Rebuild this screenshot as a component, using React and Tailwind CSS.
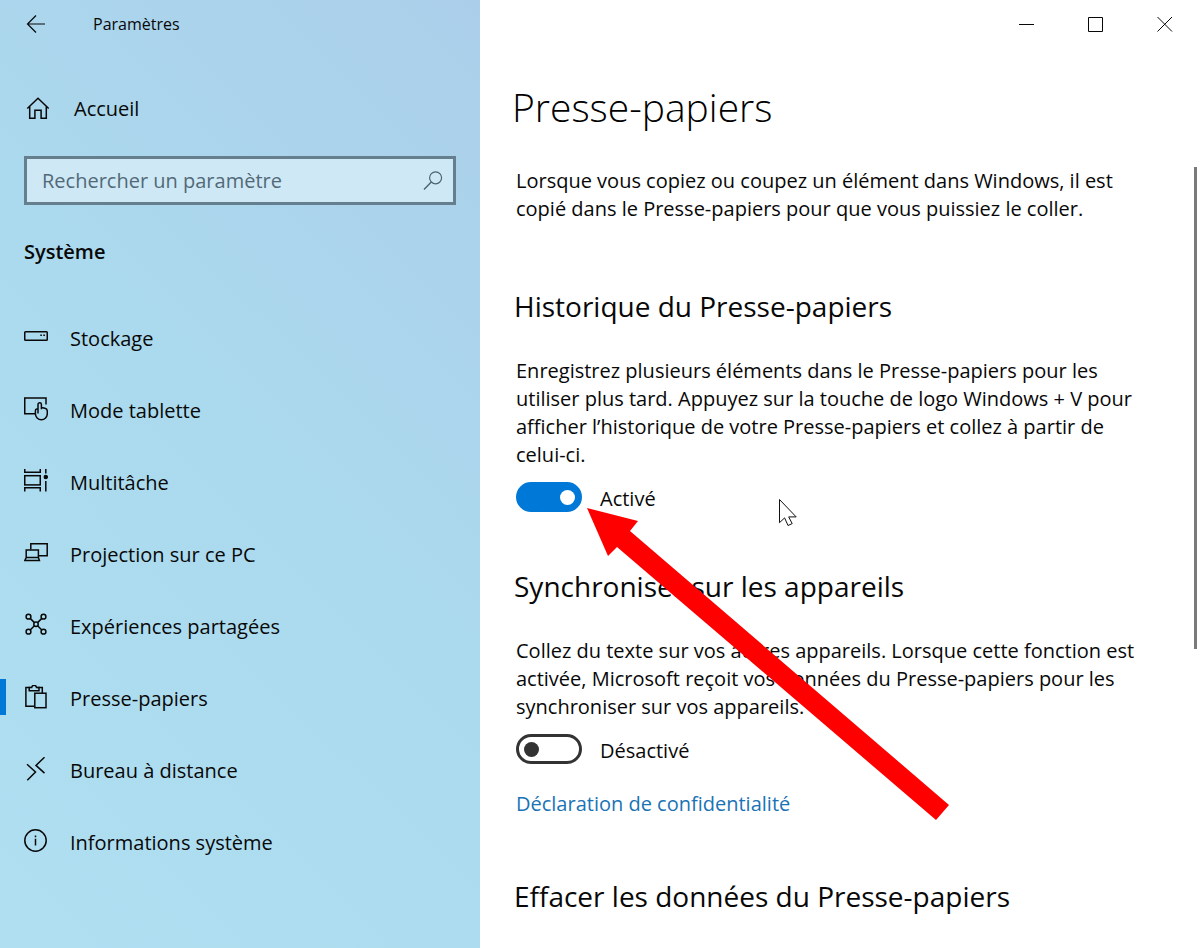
import React, { useState } from 'react';

const Icon = ({ children, className = 'w-6 h-6' }) => (
  <svg
    viewBox="0 0 24 24"
    fill="none"
    stroke="currentColor"
    strokeWidth="1.5"
    aria-hidden="true"
    className={`${className} shrink-0`}
  >
    {children}
  </svg>
);

const NAV_ITEMS = [
  {
    label: 'Stockage',
    icon: (
      <>
        <rect x="0.75" y="6.75" width="22.5" height="8.5" rx="0.8" />
        <path d="M16.3 10.2h1.6M19.3 10.2h1.6" />
      </>
    ),
  },
  {
    label: 'Mode tablette',
    icon: (
      <>
        <path d="M11 16.7H0.75V1H22v6.5" />
        <path d="M14 16.5V7.4a1.7 1.7 0 0 1 3.4 0v4.8V10.4l3.5.9q2.4.6 2.4 2.8v2.6a5.9 5.9 0 0 1-11.9 0v-3q0-1.6 1.4-1.8l1.2-.1" />
      </>
    ),
  },
  {
    label: 'Multitâche',
    icon: (
      <>
        <path d="M0.75 0v3.2h15.5V0M0.75 22.5v-3.8h15.5v3.8" />
        <rect x="0.75" y="6.7" width="15.5" height="9.2" />
        <path d="M21.8 0v4.5M21.8 12v10.5" />
        <circle cx="21.8" cy="8" r="1.5" fill="currentColor" />
      </>
    ),
  },
  {
    label: 'Projection sur ce PC',
    icon: (
      <>
        <path d="M6.8 8.6V2.7h16.4v12.1H15" />
        <path d="M2.2 16.6V9.1h12.2v7.5M2.2 16.6h12.2l1 2.8H.9z" />
      </>
    ),
  },
  {
    label: 'Expériences partagées',
    icon: (
      <>
        <circle cx="4.5" cy="3.7" r="2.4" />
        <circle cx="19.5" cy="3.7" r="2.4" />
        <circle cx="4.5" cy="18.7" r="2.4" />
        <circle cx="19.5" cy="18.7" r="2.4" />
        <circle cx="12" cy="11.2" r="2.2" />
        <path d="M6.2 5.4l4.2 4.2M17.8 5.4l-4.2 4.2M6.2 17l4.2-4.2M17.8 17l-4.2-4.2" />
      </>
    ),
  },
  {
    label: 'Presse-papiers',
    active: true,
    icon: (
      <>
        <path d="M10 21.3H1.9V2.5h4.3M13.5 2.5h4.8v5.4" />
        <path d="M5.2 5.8V2.5h2.5q.3-2.2 2.4-2.2t2.4 2.2H15v3.3z" />
        <rect x="10.8" y="8.2" width="11.2" height="14.5" />
      </>
    ),
  },
  {
    label: 'Bureau à distance',
    icon: <path d="M20.5 0.3L12 8.4l8.5 7.7M3 7.2l8.5 7.8L3.3 23.2" />,
  },
  {
    label: 'Informations système',
    icon: (
      <>
        <circle cx="11.5" cy="11.5" r="10.7" />
        <path d="M11.5 9.7v6.8M11.5 6.4v1.8" />
      </>
    ),
  },
];

const Toggle = ({ id, checked, onChange }) => (
  <div className="flex items-center gap-[18px] h-[30px]">
    <span className="relative w-[66px] h-[30px]">
      <input
        id={id}
        type="checkbox"
        role="switch"
        checked={checked}
        onChange={(e) => onChange(e.target.checked)}
        className="peer block w-full h-full appearance-none rounded-full border-[3px] border-[#333333] bg-white checked:border-[#0078d7] checked:bg-[#0078d7]"
      />
      <span className="pointer-events-none absolute left-2 top-2 w-[15px] h-[15px] rounded-full bg-[#333333] peer-checked:left-11 peer-checked:bg-white" />
    </span>
    <label htmlFor={id} className="pt-[3px]">{checked ? 'Activé' : 'Désactivé'}</label>
  </div>
);

const Sidebar = () => (
  <aside className="w-2/5 shrink-0 bg-linear-225 from-[#abcfea] via-[#abdaee] to-[#afdff1]">
    <header className="flex items-center h-12">
      <button type="button" aria-label="Retour" className="ml-6">
        <Icon>
          <path d="M21 12H3.5M12 3.5L3.5 12l8.5 8.5" strokeWidth="1.2" />
        </Icon>
      </button>
      <span className="ml-[45px] text-base">Paramètres</span>
    </header>

    <div className="px-6 pt-[37px]">
      <a href="#accueil" className="flex items-center gap-6 h-12 pl-[2px]">
        <Icon>
          <path d="M1.3 11.5L12 1.3l10.7 10.2M3.7 9.4v11.9h5.2v-8h6.2v8h5.2V9.4" />
        </Icon>
        <span>Accueil</span>
      </a>

      <div className="mt-[23px] flex items-center h-[49px] border-[3px] border-[#667f8e] bg-[#cfe8f5] pl-[15px] pr-2 text-[#4b6371]">
        <input
          type="search"
          aria-label="Rechercher un paramètre"
          placeholder="Rechercher un paramètre"
          className="flex-1 min-w-0 bg-transparent outline-none placeholder:text-[#526a78]"
        />
        <Icon>
          <circle cx="14.6" cy="8.8" r="6" strokeWidth="1.2" />
          <path d="M10.3 13.1L3 20.5" strokeWidth="1.4" />
        </Icon>
      </div>

      <h2 className="mt-[33px] font-semibold">Système</h2>
    </div>

    <nav className="mt-[37px]">
      {NAV_ITEMS.map((item) => (
        <a
          key={item.label}
          href="#systeme"
          aria-current={item.active ? 'page' : undefined}
          className="flex items-center h-[72px]"
        >
          <span className={`w-[6px] h-9 mb-1 ${item.active ? 'bg-[#0078d7]' : ''}`} />
          <Icon className="w-6 h-6 ml-[18px] mb-1">{item.icon}</Icon>
          <span className="ml-[22px]">{item.label}</span>
        </a>
      ))}
    </nav>
  </aside>
);

const WindowControls = () => (
  <div className="flex justify-end h-12 pr-px">
    <button type="button" aria-label="Réduire" className="w-[69px] flex items-center justify-center">
      <svg width="16" height="16" stroke="currentColor" fill="none"><path d="M0 8.5h15" /></svg>
    </button>
    <button type="button" aria-label="Agrandir" className="w-[69px] flex items-center justify-center">
      <svg width="16" height="16" stroke="currentColor" fill="none"><path d="M.5 1.5h14v14H.5z" /></svg>
    </button>
    <button type="button" aria-label="Fermer" className="w-[69px] flex items-center justify-center">
      <svg width="16" height="16" stroke="currentColor" fill="none"><path d="M.5 1l14.5 14.5M15 1L.5 15.5" /></svg>
    </button>
  </div>
);

const SectionTitle = ({ children }) => (
  <h2 className="-ml-[2px] text-[28px] leading-[38px]">{children}</h2>
);

const App = () => {
  const [history, setHistory] = useState(true);
  const [sync, setSync] = useState(false);

  return (
    <div
      className="flex min-h-screen bg-white text-[20px] leading-7 text-[#080808]"
      style={{ fontFamily: '"Segoe UI", "Open Sans", "Noto Sans", sans-serif' }}
    >
      <Sidebar />

      <main className="relative flex-1 min-w-0">
        <WindowControls />

        <h1 className="ml-8 mt-8 text-[39px] leading-[54px] font-light text-black">Presse-papiers</h1>

        <div className="mt-[33px] flex items-start justify-between">
          <div className="pl-9 max-w-[676px]">
            <p>
              Lorsque vous copiez ou coupez un élément dans Windows, il est copié dans le
              Presse-papiers pour que vous puissiez le coller.
            </p>

            <section className="mt-16">
              <SectionTitle>Historique du Presse-papiers</SectionTitle>
              <p className="mt-8 mb-[13px]">
                Enregistrez plusieurs éléments dans le Presse-papiers pour les utiliser plus tard.
                Appuyez sur la touche de logo Windows + V pour afficher l’historique de votre
                Presse-papiers et collez à partir de celui-ci.
              </p>
              <Toggle id="history" checked={history} onChange={setHistory} />
            </section>

            <section className="mt-[55px]">
              <SectionTitle>Synchroniser sur les appareils</SectionTitle>
              <p className="mt-8 mb-[13px]">
                Collez du texte sur vos autres appareils. Lorsque cette fonction est activée,
                Microsoft reçoit vos données du Presse-papiers pour les synchroniser sur vos
                appareils.
              </p>
              <Toggle id="sync" checked={sync} onChange={setSync} />
              <a href="#confidentialite" className="block mt-[26px] text-[#1a73b5]">
                Déclaration de confidentialité
              </a>
            </section>

            <section className="mt-[59px]">
              <SectionTitle>Effacer les données du Presse-papiers</SectionTitle>
            </section>
          </div>

          {/* scrollbar thumb */}
          <div className="w-[3px] h-[482px] mr-[3px] shrink-0 bg-[#7a7a7a]" />
        </div>

        {/* arrow pointing at the first toggle */}
        <svg
          viewBox="0 0 362 313"
          className="pointer-events-none absolute left-[107px] top-[508px] w-[362px] h-[313px]"
          aria-hidden="true"
        >
          <path d="M0 0L51 13L43 23L362 297L349 312L30 39L21 48Z" fill="#fe0000" />
        </svg>

        {/* mouse pointer */}
        <svg
          viewBox="0 0 20 28"
          className="pointer-events-none absolute left-[299px] top-[499px] w-5 h-7"
          aria-hidden="true"
        >
          <path
            d="M.5.5v23.2l5.1-4.8 3.4 7.6 4.2-1.9-3.5-6.7h7.5z"
            fill="#fff"
            stroke="#111"
          />
        </svg>
      </main>
    </div>
  );
};

export default App;
